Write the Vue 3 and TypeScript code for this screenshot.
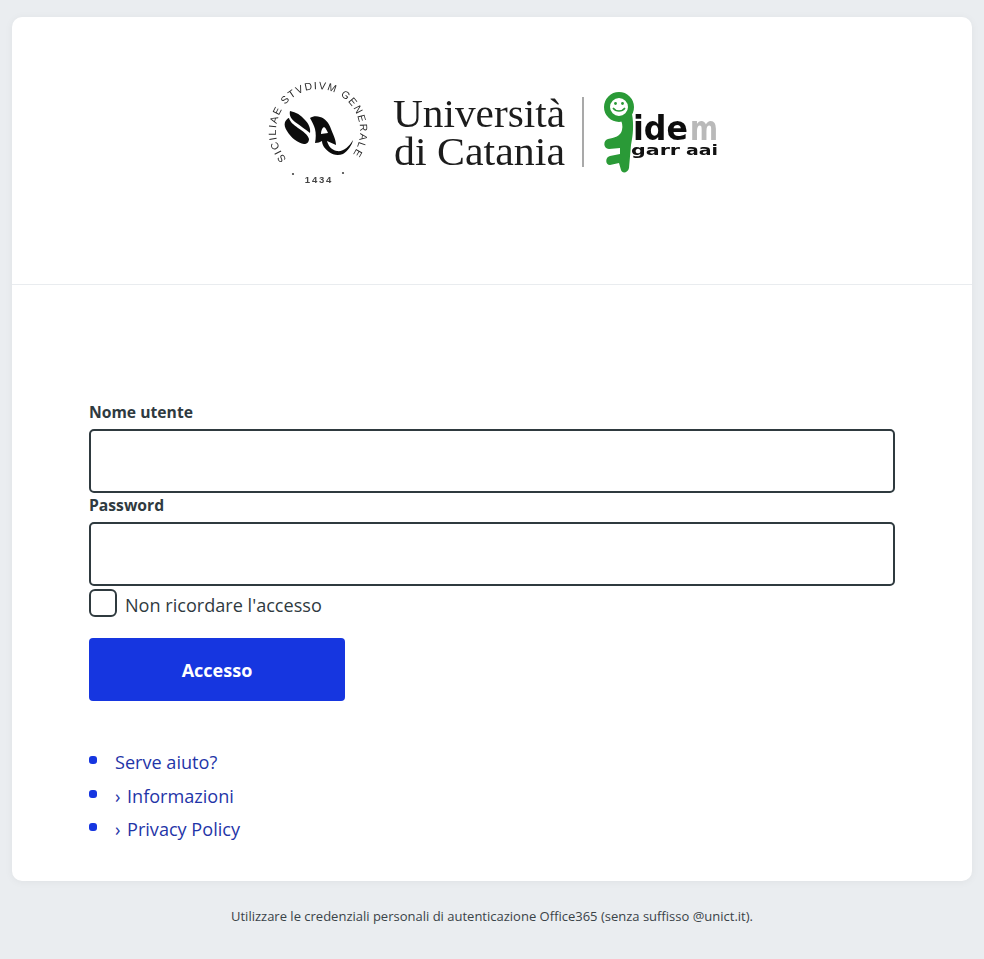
<template>
  <div class="page">
    <div class="card">
      <div class="card-header">
        <svg class="logo" width="460" height="115" viewBox="262 72 460 115" aria-label="Università di Catania - IDEM GARR AAI">
          <defs>
            <path id="seal-arc" d="M 286.6 159 A 42 42 0 1 1 349.4 159" />
          </defs>
          <text class="seal-text" letter-spacing="1.4">
            <textPath href="#seal-arc">SICILIAE STVDIVM GENERALE</textPath>
          </text>
          <text class="seal-year" x="319" y="183" text-anchor="middle" letter-spacing="1.8">1434</text>
          <circle cx="293" cy="174" r="1.1" fill="#444" />
          <circle cx="343" cy="173" r="1.1" fill="#444" />
          <!-- emblem -->
          <path d="M290 111C296 112 301 115 305 120C308 123 311 128 310 133C306 130 301 126 295 122C291 119 289 115 290 111Z" fill="#0c0c0c" />
          <path d="M285 122C286 120 288 118 289 118C290 122 294 125 298 128C303 131 308 135 309 139C309 142 307 144 304 144C298 143 291 138 287 131C285 128 284 125 285 122Z" fill="#0c0c0c" />
          <path fill-rule="evenodd" d="M310 118C313 116 317 116 320 117C325 118 329 123 331 129C333 134 336 140 336 145C333 144 330 142 327 141C328 145 331 150 337 151C343 152 349 147 353 140C352 145 348 151 343 154C338 156 333 155 329 152C325 149 322 145 322 141C320 142 318 143 315 143C316 138 316 133 315 129C314 125 312 122 310 118ZM324 127C322 128 321 131 321 134C323 134 326 133 328 133C327 131 326 128 324 127Z" fill="#0c0c0c" />
          <text class="uni" x="393" y="127" textLength="172" lengthAdjust="spacingAndGlyphs">Università</text>
          <text class="uni" x="394" y="165" textLength="171" lengthAdjust="spacingAndGlyphs">di Catania</text>
          <rect x="582.5" y="97" width="1" height="70" fill="#555" />
          <!-- key -->
          <circle cx="619" cy="107" r="12" fill="none" stroke="#2a9a37" stroke-width="6" />
          <path d="M620 118L632 114C634 125 633 135 631 145L629 168C628 173 622 174 621 170L619 163L610 165C605 165 605 157 610 156L620 154L620 148L609 149C603 149 603 140 608 139C614 138 621 136 622 130C623 126 622 122 620 118Z" fill="#2a9a37" />
          <circle cx="615.5" cy="103.5" r="1.4" fill="#2a9a37" />
          <circle cx="622.5" cy="103.5" r="1.4" fill="#2a9a37" />
          <path d="M613 108C616 112 622 112 625 108" fill="none" stroke="#2a9a37" stroke-width="1.5" />
          <text class="idem" x="633" y="140" textLength="55" lengthAdjust="spacingAndGlyphs">ide</text>
          <text class="idem idem-m" x="690" y="140" textLength="28" lengthAdjust="spacingAndGlyphs">m</text>
          <text class="garr" x="631" y="155" textLength="49" lengthAdjust="spacingAndGlyphs">garr</text>
          <text class="garr" x="686" y="155" textLength="32" lengthAdjust="spacingAndGlyphs">aai</text>
        </svg>
      </div>
      <form class="card-body" @submit.prevent>
        <label class="field-label" for="username">Nome utente</label>
        <input id="username" v-model="username" class="field" type="text" />
        <label class="field-label" for="password">Password</label>
        <input id="password" v-model="password" class="field" type="password" />
        <label class="remember">
          <input v-model="noRemember" type="checkbox" />
          <span>Non ricordare l'accesso</span>
        </label>
        <button class="submit" type="submit">Accesso</button>
        <ul class="links">
          <li v-for="link in links" :key="link.label">
            <a href="#"><span v-if="link.arrow" class="arrow">›</span>{{ link.label }}</a>
          </li>
        </ul>
      </form>
    </div>
    <p class="note">Utilizzare le credenziali personali di autenticazione Office365 (senza suffisso @unict.it).</p>
  </div>
</template>

<script setup lang="ts">
import { ref } from 'vue'

interface HelpLink {
  label: string
  arrow: boolean
}

const username = ref('')
const password = ref('')
const noRemember = ref(false)

const links: HelpLink[] = [
  { label: 'Serve aiuto?', arrow: false },
  { label: 'Informazioni', arrow: true },
  { label: 'Privacy Policy', arrow: true }
]
</script>

<style>
html,
body {
  background: #eaedf0;
}
</style>

<style scoped>
.page {
  box-sizing: border-box;
  height: 959px;
  padding: 17px 12px 0;
  font-family: "Open Sans", "Noto Sans", sans-serif;
  color: #2f3a3f;
}

.card {
  background: #fff;
  border-radius: 10px;
  box-shadow: 0 1px 8px rgba(0, 0, 0, 0.05);
  height: 864px;
}

.card-header {
  box-sizing: border-box;
  height: 268px;
  padding-top: 55px;
  display: flex;
  justify-content: center;
  align-items: flex-start;
  border-bottom: 1px solid #e9ecef;
}

.logo {
  display: block;
  filter: blur(0.4px);
}

.seal-text {
  font: 10.5px "Liberation Sans", sans-serif;
  fill: #2a2a2a;
}

.seal-year {
  font: bold 9.5px "Liberation Sans", sans-serif;
  fill: #444;
}

.uni {
  font: 41px "Liberation Serif", serif;
  fill: #1c1c1c;
}

.idem {
  font: bold 33px "DejaVu Sans", sans-serif;
  fill: #0d0d0d;
}

.idem-m {
  fill: #b9b9b9;
}

.garr {
  font: bold 14.5px "DejaVu Sans", sans-serif;
  fill: #111;
}

.card-body {
  padding: 115px 77px 0;
  display: flex;
  flex-direction: column;
  align-items: flex-start;
}

.field-label {
  display: block;
  height: 29px;
  font-size: 15.7px;
  font-weight: 700;
  line-height: 24px;
}

.field {
  box-sizing: border-box;
  width: 100%;
  height: 64px;
  border: 2px solid #2f3a3f;
  border-radius: 5px;
  background: #fff;
  padding: 0 12px;
  font: inherit;
}

.remember {
  display: flex;
  align-items: flex-start;
  gap: 8px;
  height: 28px;
  margin-top: 3px;
  font-size: 18.1px;
  line-height: 32px;
}

.remember input {
  appearance: none;
  box-sizing: border-box;
  width: 28px;
  height: 28px;
  margin: 0;
  border: 2px solid #2f3a3f;
  border-radius: 6px;
  background: #fff;
}

.submit {
  width: 256px;
  height: 63px;
  margin-top: 21px;
  border: none;
  border-radius: 4px;
  background: #1636e0;
  color: #fff;
  font: 700 18px "Open Sans", "Noto Sans", sans-serif;
}

.links {
  list-style: none;
  margin: 45px 0 0;
  padding: 0;
}

.links li {
  position: relative;
  padding-left: 26px;
  font-size: 18.1px;
  line-height: 33.5px;
}

.links li::before {
  content: "";
  position: absolute;
  left: 0;
  top: 10px;
  width: 8px;
  height: 8px;
  border-radius: 3px;
  background: #1636e0;
}

.links a {
  color: #1f35a8;
  text-decoration: none;
}

.arrow {
  display: inline-block;
  width: 12px;
}

.note {
  margin: 25px 0 0;
  text-align: center;
  font-size: 13px;
  line-height: 20px;
  color: #3a4348;
}
</style>
